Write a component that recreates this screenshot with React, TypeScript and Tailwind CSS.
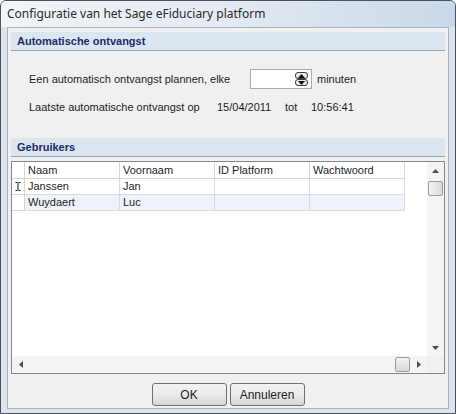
import React from "react"

const body = { fontFamily: '"Liberation Sans", Arial, sans-serif' }

function Arrow({ dir }: { dir: "up" | "down" | "left" | "right" }) {
    const pts = {
        up: "0,4 3.5,0 7,4",
        down: "0,0 7,0 3.5,4",
        left: "4,0 4,7 0,3.5",
        right: "0,0 0,7 4,3.5",
    }[dir]
    const vertical = dir === "up" || dir === "down"
    return (
        <svg width={vertical ? 7 : 4} height={vertical ? 4 : 7} viewBox={vertical ? "0 0 7 4" : "0 0 4 7"}>
            <polygon points={pts} fill="#4d4d4d" />
        </svg>
    )
}

function SectionHeader({ title }: { title: string }) {
    return (
        <div className="h-[19px] mx-[3px] bg-[#dce6f0] border-b border-[#9ba6b3] flex items-center pl-[6px]">
            <span className="text-[11px] font-bold text-[#1b2a6e]">{title}</span>
        </div>
    )
}

function Spinner() {
    return (
        <div className="w-[62px] h-[20px] border border-[#a5acb5] bg-white flex items-center justify-end pr-[3px]">
            <div className="flex flex-col gap-0">
                <div className="w-[13px] h-[7px] rounded-[3px] border border-[#3c3c3c] bg-[#e9e9e9] flex items-center justify-center">
                    <svg width="7" height="4" viewBox="0 0 7 4"><polygon points="0,4 3.5,0 7,4" fill="#111" /></svg>
                </div>
                <div className="w-[13px] h-[7px] rounded-[3px] border border-[#3c3c3c] bg-[#e9e9e9] flex items-center justify-center">
                    <svg width="7" height="4" viewBox="0 0 7 4"><polygon points="0,0 7,0 3.5,4" fill="#111" /></svg>
                </div>
            </div>
        </div>
    )
}

const columns = ["Naam", "Voornaam", "ID Platform", "Wachtwoord"]
const users = [
    ["Janssen", "Jan", "", ""],
    ["Wuydaert", "Luc", "", ""],
]

function UsersGrid() {
    return (
        <div className="h-[213px] mx-[3px] mt-[4px] border border-[#828790] bg-white flex flex-col">
            <div className="flex flex-1 min-h-0">
                <div className="flex-1 flex flex-col">
                    {/* header row */}
                    <div className="flex h-[17px]">
                        <div className="w-[13px] border-r border-b border-[#d5d5d5]" />
                        {columns.map((c) => (
                            <div key={c} className="w-[95px] border-r border-b border-[#d5d5d5] flex items-center pl-[3px] text-[11px] text-[#1e1e1e]">
                                {c}
                            </div>
                        ))}
                    </div>
                    {users.map((u, i) => (
                        <div key={i} className={`flex h-[16px] ${i % 2 === 1 ? "" : ""}`}>
                            <div className="w-[13px] border-r border-b border-[#d5d5d5] bg-white flex items-center justify-center">
                                {i === 0 && (
                                    <svg width="6" height="9" viewBox="0 0 6 9">
                                        <path d="M0.5 0.5h2M3.5 0.5h2M0.5 8.5h2M3.5 8.5h2M3 1v7" stroke="#111" strokeWidth="1" fill="none" />
                                    </svg>
                                )}
                            </div>
                            {u.map((v, j) => (
                                <div
                                    key={j}
                                    className={`w-[95px] border-r border-b border-[#dadada] flex items-center pl-[3px] text-[11px] text-[#1e1e1e] ${i === 1 ? "bg-[#eef2fa]" : "bg-white"}`}
                                >
                                    {v}
                                </div>
                            ))}
                        </div>
                    ))}
                </div>
                {/* vertical scrollbar */}
                <div className="w-[17px] bg-[#f4f4f4] flex flex-col">
                    <div className="h-[17px] flex items-center justify-center">
                        <Arrow dir="up" />
                    </div>
                    <div className="h-[15px] mt-[2px] mx-[1px] rounded-[2px] border border-[#9c9c9c] bg-gradient-to-r from-[#f3f3f3] to-[#d9d9d9]" />
                    <div className="flex-1" />
                    <div className="h-[17px] flex items-center justify-center">
                        <Arrow dir="down" />
                    </div>
                </div>
            </div>
            {/* horizontal scrollbar */}
            <div className="h-[17px] flex">
                <div className="flex-1 bg-[#f4f4f4] flex items-center">
                    <div className="w-[17px] h-full flex items-center justify-center">
                        <Arrow dir="left" />
                    </div>
                    <div className="flex-1" />
                    <div className="w-[15px] h-[15px] rounded-[2px] border border-[#9c9c9c] bg-gradient-to-b from-[#f3f3f3] to-[#d9d9d9]" />
                    <div className="w-[17px] h-full flex items-center justify-center">
                        <Arrow dir="right" />
                    </div>
                </div>
                <div className="w-[17px] bg-[#f0f0f0]" />
            </div>
        </div>
    )
}

function DialogButton({ label }: { label: string }) {
    return (
        <button className="w-[75px] h-[23px] rounded-[3px] border border-[#707070] bg-gradient-to-b from-[#f2f2f2] via-[#ebebeb] to-[#d6d6d6] text-[12px] text-[#1e1e1e]">
            {label}
        </button>
    )
}

export default function App() {
    return (
        <div className="w-[456px] h-[414px] bg-[#dce4ed] border border-[#4b525c] rounded-t-[6px] flex flex-col overflow-hidden" style={body}>
            {/* title bar */}
            <div className="h-[26px] flex items-center pl-[6px] bg-gradient-to-r from-[#f1f4f8] via-[#e3eaf2] to-[#c9d8e9]">
                <span className="text-[12px] text-[#2a2a2a]" style={{ fontFamily: '"Noto Sans", sans-serif' }}>
                    Configuratie van het Sage eFiduciary platform
                </span>
            </div>
            <div className="flex-1 mx-[6px] mb-[4px] bg-[#f0f0f0] border border-[#a8b4c1] flex flex-col">
                <div className="mt-[4px]">
                    <SectionHeader title="Automatische ontvangst" />
                </div>
                <div className="mt-[18px] h-[20px] flex items-center pl-[21px] text-[11px] text-[#1e1e1e]">
                    <span className="w-[221px]">Een automatisch ontvangst plannen, elke</span>
                    <Spinner />
                    <span className="ml-[5px]">minuten</span>
                </div>
                <div className="mt-[9px] h-[18px] flex items-center pl-[21px] text-[11px] text-[#1e1e1e]">
                    <span className="w-[188px]">Laatste automatische ontvangst op</span>
                    <span className="w-[68px]">15/04/2011</span>
                    <span className="w-[26px]">tot</span>
                    <span>10:56:41</span>
                </div>
                <div className="mt-[22px]">
                    <SectionHeader title="Gebruikers" />
                </div>
                <UsersGrid />
                <div className="mt-[9px] flex justify-center gap-[3px]">
                    <DialogButton label="OK" />
                    <DialogButton label="Annuleren" />
                </div>
            </div>
        </div>
    )
}
